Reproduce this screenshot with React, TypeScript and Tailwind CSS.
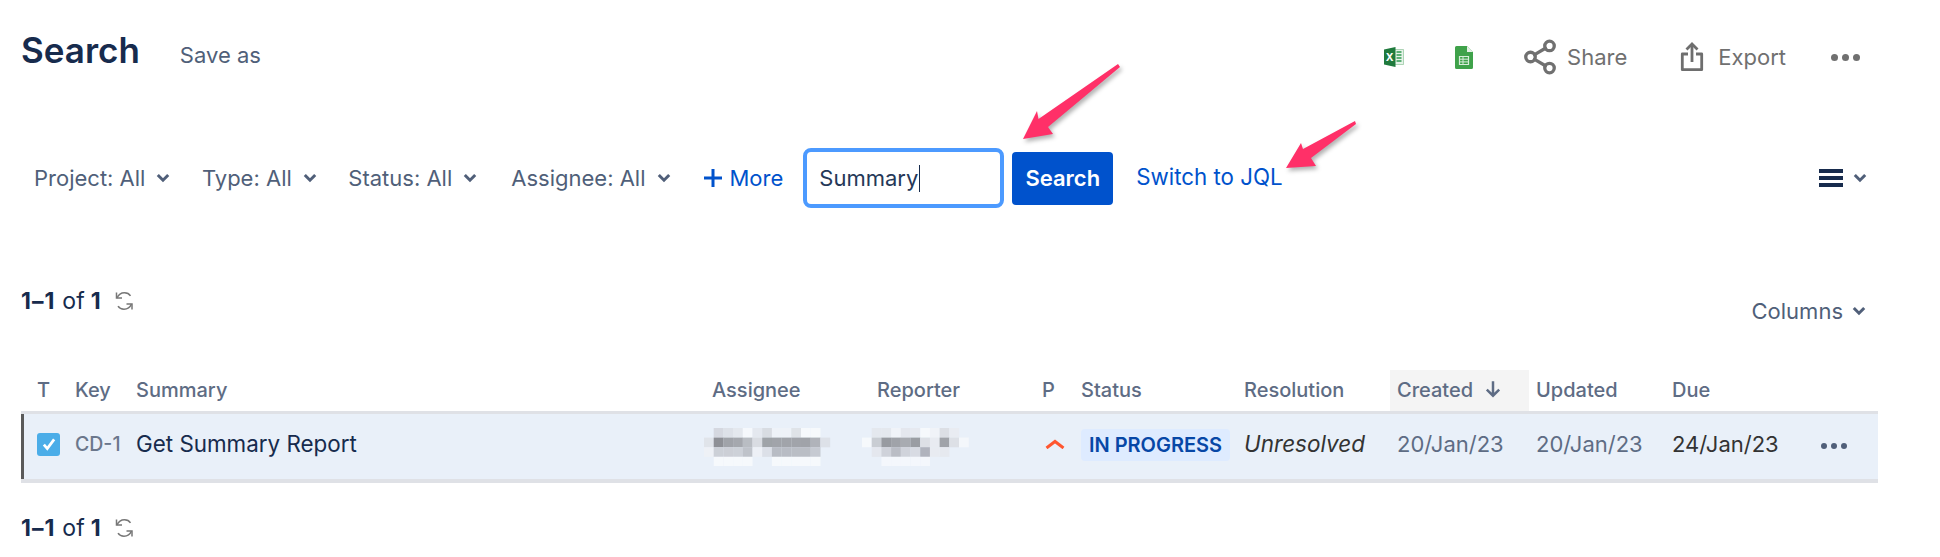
import { Share2 } from "lucide-react";

const gridCols =
  "grid grid-cols-[54px_61px_576px_165px_165px_39px_163px_146px_139px_143px_1fr]";

const filters = [
  { label: "Project: All", className: "" },
  { label: "Type: All", className: "ml-[31.5px]" },
  { label: "Status: All", className: "ml-[31.5px]" },
  { label: "Assignee: All", className: "ml-[34px]" },
];

const assigneeBlur = [
  ["", "#d5d8e0", "#dde1e8", "#e4e8ee", "#f5f8fc", "#e4e8ef", "#d8dce2", "#eef2f8", "#eef2f8", "#dfe3e8", "#f6f9fc", "#f6f9fc", "", ""],
  ["#e0e4ea", "#8e9096", "#a0a3a9", "#a5a8ae", "#b9bdc3", "#d9dce2", "#9fa3a8", "#a1a4aa", "#a1a4aa", "#a1a4aa", "#a0a3a9", "#b0b3ba", "#dde1e8", ""],
  ["#eef1f6", "#ccd0d7", "#cccfd6", "#cdd1d8", "#bfc3ca", "#edf0f6", "#dce0e8", "#b8bcc4", "#b8bcc4", "#babec5", "#babec5", "#c6cad2", "", ""],
  ["", "#f6f9fc", "#f6f9fc", "#f6f9fc", "#f6f9fc", "", "", "#f6f9fc", "#f6f9fc", "#f6f9fc", "#f6f9fc", "#f6f9fc", "", ""],
];

const reporterBlur = [
  ["", "#e4e8ee", "#e4e8ee", "#f0f3f8", "#e4e7ee", "#e6e9f0", "#f6f9fc", "#f0f3f8", "#dcdfe5", "#e9ecf2", ""],
  ["#f6f9fc", "#c9cdd3", "#989ba1", "#a0a3a9", "#a8abb1", "#9a9da3", "#dde0e6", "#e8ebf1", "#a0a3a9", "#dde0e6", "#f4f7fb"],
  ["", "#e4e7ee", "#cfd2da", "#babdc5", "#d0d3db", "#d8dbe3", "#b0b3bd", "#e8ebf1", "#e6e9ef", "", ""],
  ["", "", "#f4f7fc", "#f4f7fc", "#f4f7fc", "#f4f7fc", "#f4f7fc", "", "", "", ""],
];

const Chevron = ({ className }: { className?: string }) => (
  <svg viewBox="0 0 14 10" className={`h-[10px] w-[14px] shrink-0 ${className ?? ""}`} fill="none">
    <path d="M1.800 2 7 7.200 12.200 2" stroke="currentColor" strokeWidth="3" />
  </svg>
);

const Blurred = ({ rows }: { rows: string[][] }) => (
  <svg width={rows[0].length * 9.7} height="38" className="block">
    <g style={{ filter: "blur(0.7px)" }}>
      {rows.map((row, y) =>
        row.map((color, x) =>
          color ? (
            <rect key={`${x}-${y}`} x={x * 9.7} y={y * 9.6} width="9.8" height="9.7" fill={color} />
          ) : null,
        ),
      )}
    </g>
  </svg>
);

const RefreshIcon = () => (
  <svg viewBox="0 0 20 20" className="h-5 w-5 shrink-0" fill="none" stroke="#777777" strokeWidth="1.500">
    <path d="M2.500 1.500V7H8" />
    <path d="M3 7C4.500 3.500 7.500 1.800 10.500 1.800c2.500 0 4.700 1 6 3" />
    <path d="M18 18.500V13h-5.500" />
    <path d="M17.500 13C16 16.500 13 18.200 10 18.200c-2.500 0-4.700-1-6-3" />
  </svg>
);

const Pagination = ({ className }: { className?: string }) => (
  <div className={`flex items-center text-[23px] leading-[20px] text-[#172b4d] ${className ?? ""}`}>
    <span className="font-bold tracking-[1px]">1–1</span>
    <span className="ml-[7px]">of</span>
    <span className="ml-[6px] font-bold">1</span>
    <span className="ml-[13px]">
      <RefreshIcon />
    </span>
  </div>
);

const ExcelIcon = () => (
  <svg viewBox="0 0 20 20" className="h-5 w-5 shrink-0">
    <path d="M10 2.500h9.500v15H10z" fill="#e6f3e9" stroke="#7dbb8c" strokeWidth="0.6" />
    <path d="M12.500 5h5M12.500 8h5M12.500 11h5M12.500 14h5" stroke="#2f9a50" strokeWidth="1.700" />
    <path d="M0 2.400 11.500 0v20L0 17.600z" fill="#1f7a3d" />
    <text x="5.600" y="14" textAnchor="middle" fontSize="10.500" fontWeight="700" fill="#fff" fontFamily="Inter, sans-serif">
      X
    </text>
  </svg>
);

const SheetsIcon = () => (
  <svg viewBox="0 0 18 23" className="h-[23px] w-[18px] shrink-0">
    <path d="M1.500 0H12l6 6v15.500a1.500 1.500 0 0 1-1.500 1.500h-15A1.500 1.500 0 0 1 0 21.500v-20A1.500 1.500 0 0 1 1.500 0z" fill="#3fa24a" />
    <path d="M12 0l6 6h-6z" fill="#e4efe5" />
    <path d="M4.500 10.500h9v8h-9z" fill="none" stroke="#d6ecd8" strokeWidth="1.200" />
    <path d="M4.500 13.200h9M4.500 15.900h9M8 10.500v8" stroke="#d6ecd8" strokeWidth="1" />
  </svg>
);

const ExportIcon = () => (
  <svg viewBox="0 0 24 30" className="h-[30px] w-6 shrink-0" fill="none" stroke="#6e6e6e" strokeWidth="2.800">
    <path d="M12 20V2" />
    <path d="M6.500 7.500 12 2l5.500 5.500" />
    <path d="M8 12H2.300v15.700h19.400V12H16" strokeLinejoin="round" />
  </svg>
);

const HeadCell = ({ children, className }: { children?: React.ReactNode; className?: string }) => (
  <div className={`flex items-center pb-[2px] text-[20px] font-medium text-[#5e6c84] ${className ?? ""}`}>{children}</div>
);

export default function App() {
  return (
    <div className="relative h-[557px] w-full overflow-hidden bg-white pl-[21px] pr-[62px] font-['Inter',sans-serif]">
      {/* title bar */}
      <div className="flex h-[100px] items-baseline pt-[23px]">
        <h1 className="text-[35px] font-semibold leading-[54px] text-[#172b4d]">Search</h1>
        <span className="ml-[40px] text-[22px] text-[#505f79]">Save as</span>
        <div className="ml-auto mr-[18px] flex items-center self-start pt-[15px] text-[22px] text-[#707070]">
          <ExcelIcon />
          <span className="ml-[51px]">
            <SheetsIcon />
          </span>
          <Share2 className="ml-[48px] h-[38px] w-[38px]" strokeWidth={2.1} />
          <span className="ml-[8px]">Share</span>
          <span className="ml-[53px]">
            <ExportIcon />
          </span>
          <span className="ml-[14px]">Export</span>
          <div className="ml-[45px] flex gap-1">
            <span className="h-[7px] w-[7px] rounded-full bg-current" />
            <span className="h-[7px] w-[7px] rounded-full bg-current" />
            <span className="h-[7px] w-[7px] rounded-full bg-current" />
          </div>
        </div>
      </div>

      {/* filters */}
      <div className="mt-[48px] flex h-[60px] items-center pl-[13px] text-[22px] text-[#505f79]">
        {filters.map((f) => (
          <button key={f.label} className={`flex items-center gap-[11px] ${f.className}`}>
            {f.label}
            <Chevron />
          </button>
        ))}
        <button className="ml-[33px] flex items-center text-[#0052cc]">
          <svg viewBox="0 0 18 18" className="h-[18px] w-[18px]" fill="none" stroke="currentColor" strokeWidth="3">
            <path d="M9 0v18M0 9h18" />
          </svg>
          <span className="ml-[8px]">More</span>
        </button>
        <div className="ml-[20px] flex h-[60px] w-[201px] items-center rounded-[8px] border-[4px] border-[#4c9aff] pl-[12px] text-[#253858]">
          Summary
          <span className="ml-px h-[27px] w-px bg-[#172b4d]" />
        </div>
        <button className="ml-[8px] h-[53px] w-[101px] rounded-[4px] bg-[#0052cc] text-[22px] font-semibold text-white">
          Search
        </button>
        <a className="ml-[23px] -mt-[2px] text-[22.3px] text-[#0052cc]">Switch to JQL</a>
        <div className="ml-auto mr-[11px] flex items-center gap-[10px]">
          <div className="flex w-6 flex-col gap-[3px]">
            <span className="h-1 bg-[#172b4d]" />
            <span className="h-1 bg-[#172b4d]" />
            <span className="h-1 bg-[#172b4d]" />
          </div>
          <Chevron />
        </div>
      </div>

      {/* pagination and columns */}
      <div className="mt-[83px] flex h-[79px] items-start justify-between">
        <Pagination />
        <button className="mr-[12px] mt-[10px] flex items-center gap-[9px] text-[22px] leading-[20px] text-[#505f79]">
          Columns
          <Chevron />
        </button>
      </div>

      {/* table */}
      <div className={`${gridCols} h-[41px]`}>
        <HeadCell className="pl-[16px]">T</HeadCell>
        <HeadCell>Key</HeadCell>
        <HeadCell>Summary</HeadCell>
        <HeadCell>Assignee</HeadCell>
        <HeadCell>Reporter</HeadCell>
        <HeadCell>P</HeadCell>
        <HeadCell>Status</HeadCell>
        <HeadCell>Resolution</HeadCell>
        <HeadCell className="bg-[#f4f4f4] pl-[7px]">
          Created
          <svg viewBox="0 0 16 16" className="-mt-[2px] ml-[11px] h-[18px] w-[18px]" fill="none" stroke="currentColor" strokeWidth="2.200">
            <path d="M8 1v13M2.500 8.500 8 14l5.500-5.500" />
          </svg>
        </HeadCell>
        <HeadCell className="pl-[7px]">Updated</HeadCell>
        <HeadCell>Due</HeadCell>
      </div>
      <div
        className={`${gridCols} h-[72px] items-center border-t-[3px] border-b-[4px] border-t-[#dfe1e6] border-b-[#dfe1e6] bg-[#e9f0f9] pb-[5px] text-[22px] shadow-[inset_3px_0_0_#5a5a5a]`}
      >
        <div className="pl-[16px]">
          <div className="flex h-[23px] w-[23px] items-center justify-center rounded-[3px] bg-[#4bade8]">
            <svg viewBox="0 0 14 14" className="h-4 w-4" fill="none" stroke="#fff" strokeWidth="2.400">
              <path d="M2.500 7.500 5.500 11 11.500 3" />
            </svg>
          </div>
        </div>
        <div className="mt-[2px] text-[19.500px] font-medium text-[#6b778c]">CD-1</div>
        <div className="text-[22.4px] text-[#172b4d]">Get Summary Report</div>
        <div className="-ml-[8px] mt-[5px]">
          <Blurred rows={assigneeBlur} />
        </div>
        <div className="-ml-[15px] mt-[5px]">
          <Blurred rows={reporterBlur} />
        </div>
        <div className="pl-[3px]">
          <svg viewBox="0 0 20 10" className="h-[10px] w-5" fill="none" stroke="#ff5630" strokeWidth="3">
            <path d="M1.500 9 10 2.500 18.500 9" />
          </svg>
        </div>
        <div>
          <span className="inline-block h-[32px] w-[149px] rounded-[4px] bg-[#deebff] text-center text-[20px] font-semibold leading-[32px] text-[#0747a6]">
            IN PROGRESS
          </span>
        </div>
        <div className="text-[22.5px] italic text-[#333333]">Unresolved</div>
        <div className="pl-[7px] text-[#5e6c84]">20/Jan/23</div>
        <div className="pl-[7px] text-[#5e6c84]">20/Jan/23</div>
        <div className="flex items-center justify-between pr-[31px] text-[#333333]">
          24/Jan/23
          <div className="mt-[3px] flex gap-1 text-[#505f79]">
            <span className="h-[6px] w-[6px] rounded-full bg-current" />
            <span className="h-[6px] w-[6px] rounded-full bg-current" />
            <span className="h-[6px] w-[6px] rounded-full bg-current" />
          </div>
        </div>
      </div>
      <Pagination className="mt-[35px]" />

      {/* annotation arrows */}
      <svg className="pointer-events-none absolute left-0 top-0 h-[557px] w-[1940px] drop-shadow-[2px_3px_2px_rgba(0,0,0,0.3)]">
        <polygon points="1118,64 1038.5,119 1037,111 1023,139 1053,134 1048,127 1120,67" fill="#ff3068" />
        <polygon points="1355,121 1303,149 1301,143 1286,168 1316,166 1311,158 1356,124" fill="#ff3068" />
      </svg>
    </div>
  );
}
